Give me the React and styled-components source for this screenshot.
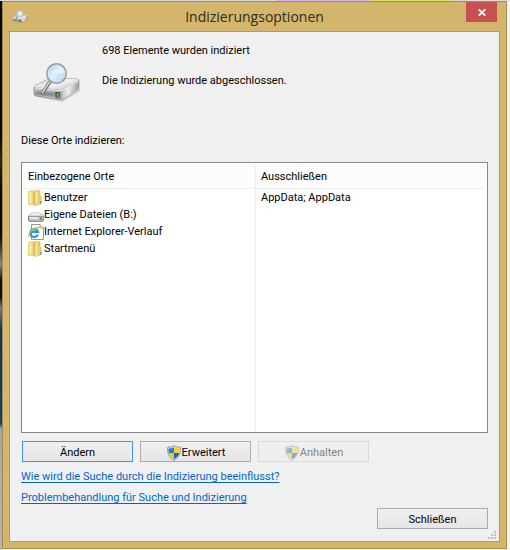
import React from "react";
import styled, { createGlobalStyle } from "styled-components";

const GlobalStyle = createGlobalStyle`
    *, *::before, *::after {
        box-sizing: border-box;
    }
    body {
        margin: 0;
        font-family: Roboto, sans-serif;
        font-size: 11px;
        line-height: 16px;
        color: #000000;
    }
`

/* --------------------------------DESKTOP AND WINDOW-------------------------------------- */

const Desktop = styled.div`
    min-height: 100vh;
    display: flex;
    padding: 1px 3px 1px 2px;
    background:
        linear-gradient(90deg, #dcdcdc 276px, #d4b5e6 276px 369px, #dddf70 371px 452px, #dcdcdc 452px) top / 100% 1px no-repeat,
        linear-gradient(#08080c 0 25%, #2c2d12 29%, #08080c 34% 43%, #85858a 48%, #0c0c10 51% 54%, #77777c 56%, #16304f 60%, #15406a 77%, #a5a5a5 78%, #b5b5b5) left / 2px 100% no-repeat,
        #f4f4f8;
`

const Window = styled.main`
    flex: 1;
    display: flex;
    flex-direction: column;
    padding: 0 6px 6px;
    border: 1px solid #a58c4e;
    background-color: #d3b66c;
`

const TitleBar = styled.header`
    display: grid;
    grid-template-columns: 31px 1fr 34px;
    height: 29px;
    padding-left: 3px;
`

const TitleIcon = styled.span`
    padding-top: 7px;
    line-height: 0;
`

const Title = styled.h1`
    margin: 0;
    text-align: center;
    font-family: "Open Sans", sans-serif;
    font-size: 14px;
    font-weight: 400;
    line-height: 30px;
    color: #2f2a1e;
`

const CloseButton = styled.button`
    display: grid;
    place-items: center;
    width: 31px;
    height: 20px;
    padding: 0;
    border: 0;
    background-color: #c75050;
`

const Client = styled.div`
    flex: 1;
    display: flex;
    flex-direction: column;
    padding: 11px 11px 12px;
    border: 1px solid #b39a5c;
    background-color: #f0f0f0;
    position: relative;
`

/* --------------------------------STATUS-------------------------------------- */

const Status = styled.section`
    display: flex;
    gap: 21px;
    height: 90px;
    padding-left: 12px;
`

const StatusIcon = styled.div`
    width: 48px;
    padding-top: 19px;
`

const StatusText = styled.p`
    margin: 0 0 14px;
`

const Label = styled.h2`
    margin: 0 0 13px;
    font-size: 11px;
    font-weight: 400;
`

/* --------------------------------LIST-------------------------------------- */

const List = styled.div`
    flex: 1;
    display: grid;
    padding: 1px 2px 1px 1px;
    border: 1px solid #828790;
    background-color: #ffffff;
`

const Table = styled.table`
    width: 100%;
    height: 100%;
    table-layout: fixed;
    border-collapse: separate;
    border-spacing: 0;
`

const HeadCell = styled.th`
    width: ${(props) => props.width || "auto"};
    height: 25px;
    padding: 1px 5px 0;
    border-bottom: 1px solid #e9eef5;
    border-right: ${(props) => (props.width ? "1px solid #e9eef5" : "0")};
    background-color: #fcfcfd;
    font-weight: 400;
    text-align: left;
`

const Cell = styled.td`
    height: ${(props) => (props.$fill ? "auto" : "17px")};
    padding: 0 5px;
    border-right: ${(props) => (props.$divider ? "1px solid #e9f0f8" : "0")};
`

const Place = styled.div`
    display: flex;
    align-items: center;
    height: 17px;
`

/* --------------------------------BUTTONS AND LINKS-------------------------------------- */

const Actions = styled.div`
    display: flex;
    gap: 7px;
    margin: 8px 0 7px;
    padding-left: 1px;
`

const Button = styled.button`
    display: flex;
    align-items: center;
    justify-content: center;
    width: 111px;
    height: 21px;
    padding: 2px 0 0;
    border: 1px solid ${(props) => (props.$primary ? "#3399ff" : "#acacac")};
    background: linear-gradient(#f0f0f0, #e5e5e5);
    font: inherit;
    color: #000000;

    &:disabled {
        border-color: #d9d9d9;
        background: #efefef;
        color: #838383;
    }
    &:disabled svg {
        opacity: 0.5;
    }
`

const HelpLink = styled.a`
    align-self: flex-start;
    margin-bottom: 5px;
    color: #0066cc;
    text-decoration: underline;
    text-underline-offset: 2px;
`

const Footer = styled.footer`
    display: flex;
    justify-content: flex-end;
    margin-top: -3px;
`

const Grip = styled.svg`
    position: absolute;
    right: 3px;
    bottom: 2px;
`

/* --------------------------------ICONS-------------------------------------- */

function DriveSearchIcon({ width, height, id }) {
    return (
        <svg width={width} height={height} viewBox="0 0 48 40" aria-hidden="true">
            <defs>
                <linearGradient id={`${id}-top`} x1="0" y1="0" x2="1" y2="1">
                    <stop offset="0" stopColor="#c9c9c9" />
                    <stop offset="0.5" stopColor="#f1f1f1" />
                    <stop offset="1" stopColor="#bdbdbd" />
                </linearGradient>
                <linearGradient id={`${id}-front`} x1="0" y1="0" x2="0" y2="1">
                    <stop offset="0" stopColor="#d4d4d4" />
                    <stop offset="0.5" stopColor="#9d9da3" />
                    <stop offset="1" stopColor="#dcdcdc" />
                </linearGradient>
                <linearGradient id={`${id}-side`} x1="0" y1="0" x2="1" y2="0">
                    <stop offset="0" stopColor="#b9b9b9" />
                    <stop offset="0.4" stopColor="#eeeeee" />
                    <stop offset="1" stopColor="#9c9c9c" />
                </linearGradient>
                <linearGradient id={`${id}-glass`} x1="0" y1="0" x2="1" y2="1">
                    <stop offset="0" stopColor="#a9d2f5" />
                    <stop offset="0.5" stopColor="#dcedfc" />
                    <stop offset="1" stopColor="#a9d0f2" />
                </linearGradient>
            </defs>
            <path d="M3 33l25 6 19-12v2L29 40 6 35z" fill="#000" opacity="0.15" />
            <path d="M1 25.500Q1 24 3 23L16 16.500Q18 15.500 20 15.600L44 16.800Q46 17 46 19L28 28.500z" fill={`url(#${id}-top)`} stroke="#a0a0a0" strokeWidth="0.600" />
            <path d="M1 25.500L28 28.500v9.500L3 34Q1 33.500 1 31.500z" fill={`url(#${id}-front)`} stroke="#808080" strokeWidth="0.700" />
            <path d="M28 28.500L46 18.500v7.500Q46 27 45 27.500L30 37.500q-1 .600-2 .500z" fill={`url(#${id}-side)`} stroke="#8b8b8b" strokeWidth="0.600" />
            <path d="M2 25.700l26 3.100 17.500-9.500" fill="none" stroke="#fafafa" strokeWidth="0.900" />
            <path d="M3.500 28.500l18 2.700v4l-18-2.700z" fill="#6b6b78" opacity="0.400" />
            <path d="M22.500 30l4 .500v6l-4-.600z" fill="#26331f" />
            <path d="M23.600 30.800l1.900.200v5l-1.900-.200z" fill="#45e71d" />
            <path d="M17.500 19L9.500 31" stroke="#6f6f72" strokeWidth="3.400" strokeLinecap="round" />
            <path d="M17.200 19L9.400 30.700" stroke="#d0d0d2" strokeWidth="1.600" strokeLinecap="round" />
            <circle cx="23.500" cy="11.500" r="9.600" fill={`url(#${id}-glass)`} stroke="#969ba0" strokeWidth="1.700" />
            <circle cx="23.500" cy="11.500" r="8.500" fill="none" stroke="#e6eef5" strokeWidth="0.600" />
            <path d="M17 13Q20 7 28 6.500Q31 9 30.500 11Q22 10 17 13z" fill="#fff" opacity="0.450" />
        </svg>
    )
}

function FolderIcon() {
    return (
        <svg width="16" height="16" viewBox="0 0 16 16" aria-hidden="true">
            <path d="M0 2.500Q0 1.500 1 1.300L5 .500Q6 .500 6 1.500v13L1 14.800Q0 14.700 0 13.700z" fill="#f0da84" stroke="#dcc068" strokeWidth="0.600" />
            <path d="M1.500 2.300L3.500 1.800v12l-2 .300z" fill="#f8ebaa" />
            <path d="M6 2Q6 1 7 .900L11 .500Q12 .500 12 1.500v4.300l1.200.700v7Q13.200 14 12.500 14.100L7 15.500Q6 15.500 6 14.500z" fill="#ebce69" stroke="#d2b355" strokeWidth="0.600" />
            <path d="M7.500 2.300l2-.200v11.800l-2 .500z" fill="#f6e395" />
            <path d="M5.200 2.500L6.500 2v13.300l-1.300-.800z" fill="#d9bc58" />
            <path d="M12 11h1.200v2.500H12z" fill="#4d9cc0" />
        </svg>
    )
}

function DriveIcon() {
    return (
        <svg width="16" height="16" viewBox="0 0 16 16" aria-hidden="true">
            <path d="M3.500 6h9L15.500 9v4l-1 1.500h-13l-1-1.500V9z" fill="#e5e5e5" stroke="#a5a5a5" strokeWidth="0.700" />
            <path d="M3.800 6.500h8.400l2.300 2.500h-13z" fill="#f6f6f6" />
            <rect x=".600" y="9.200" width="14.800" height="5" rx="1.200" fill="#c9cacd" stroke="#77797f" strokeWidth="0.900" />
            <path d="M2 10.300h8v1.500H2z" fill="#ececee" />
            <path d="M11.800 10.300h2v2.500h-2z" fill="#2ba82b" />
        </svg>
    )
}

function ExplorerIcon() {
    return (
        <svg width="16" height="16" viewBox="0 0 16 16" aria-hidden="true">
            <path d="M3.500.500h8.500l3.500 3.500v11.500h-12z" fill="#fdfdfd" stroke="#8d8d8d" strokeWidth="0.900" />
            <path d="M12 .500v3.500h3.500" fill="#e4e4e4" stroke="#9a9a9a" strokeWidth="0.800" />
            <path d="M9.800 10.700A4 4 0 1 1 10 7.800H3.500" fill="none" stroke="#1e9be4" strokeWidth="2.200" />
            <path d="M1 13C-.500 10 4 4 9.500 3.300Q11.500 3.200 10.800 5" fill="none" stroke="#f2b828" strokeWidth="1.200" />
        </svg>
    )
}

function ShieldIcon() {
    return (
        <svg width="16" height="16" viewBox="0 0 16 16" aria-hidden="true">
            <path d="M8 .500Q10.500 2.300 14.300 2.300Q15.500 11 8 15.500Q.500 11 1.700 2.300Q5.500 2.300 8 .500z" fill="#dde0e2" stroke="#84888c" strokeWidth="0.800" />
            <path d="M8 2.200v5.800H2.700Q2.400 6 2.700 3.500Q5.500 3.500 8 2.200z" fill="#1f7fd1" />
            <path d="M8 2.200Q10.500 3.500 13.300 3.500Q13.600 6 13.300 8H8z" fill="#fbd22c" />
            <path d="M2.700 8H8v6.300Q3.500 11.500 2.700 8z" fill="#f6c21c" />
            <path d="M13.300 8H8v6.300Q12.500 11.500 13.300 8z" fill="#1767b7" />
        </svg>
    )
}

const dots = [[6, 0], [3, 3], [6, 3], [0, 6], [3, 6], [6, 6]]

const places = [
    { name: "Benutzer", Icon: FolderIcon, exclude: "AppData; AppData" },
    { name: "Eigene Dateien (B:)", Icon: DriveIcon, exclude: "" },
    { name: "Internet Explorer-Verlauf", Icon: ExplorerIcon, exclude: "" },
    { name: "Startmenü", Icon: FolderIcon, exclude: "" },
]

/* ------------------------------------------------------------------------------------ */

function App() {
    return (
        <Desktop>
            <GlobalStyle />
            <Window>
                <TitleBar>
                    <TitleIcon><DriveSearchIcon id="small" width={16} height={15} /></TitleIcon>
                    <Title>Indizierungsoptionen</Title>
                    <CloseButton type="button" aria-label="Fenster schließen">
                        <svg width="8" height="7" viewBox="0 0 8 7" aria-hidden="true">
                            <path d="M.700.300l6.600 6.400M7.300.300L.700 6.700" stroke="#fff" strokeWidth="1.700" />
                        </svg>
                    </CloseButton>
                </TitleBar>
                <Client>
                    <Status>
                        <StatusIcon><DriveSearchIcon id="large" width={48} height={40} /></StatusIcon>
                        <div>
                            <StatusText>698 Elemente wurden indiziert</StatusText>
                            <StatusText>Die Indizierung wurde abgeschlossen.</StatusText>
                        </div>
                    </Status>
                    <Label id="places">Diese Orte indizieren:</Label>
                    <List>
                        <Table aria-labelledby="places">
                            <thead>
                                <tr>
                                    <HeadCell width="233px">Einbezogene Orte</HeadCell>
                                    <HeadCell>Ausschließen</HeadCell>
                                </tr>
                            </thead>
                            <tbody>
                                {places.map(({ name, Icon, exclude }) => (
                                    <tr key={name}>
                                        <Cell $divider><Place><Icon />{name}</Place></Cell>
                                        <Cell>{exclude}</Cell>
                                    </tr>
                                ))}
                                <tr aria-hidden="true">
                                    <Cell $divider $fill />
                                    <Cell $fill />
                                </tr>
                            </tbody>
                        </Table>
                    </List>
                    <Actions>
                        <Button type="button" $primary>Ändern</Button>
                        <Button type="button"><ShieldIcon />Erweitert</Button>
                        <Button type="button" disabled><ShieldIcon />Anhalten</Button>
                    </Actions>
                    <HelpLink href="#suche">Wie wird die Suche durch die Indizierung beeinflusst?</HelpLink>
                    <HelpLink href="#problem">Problembehandlung für Suche und Indizierung</HelpLink>
                    <Footer>
                        <Button type="button">Schließen</Button>
                    </Footer>
                    <Grip width="8" height="8" viewBox="0 0 8 8" aria-hidden="true">
                        {dots.map(([x, y]) => <rect key={`${x}-${y}`} x={x} y={y} width="2" height="2" fill="#bfbfbf" />)}
                    </Grip>
                </Client>
            </Window>
        </Desktop>
    )
}

export default App
